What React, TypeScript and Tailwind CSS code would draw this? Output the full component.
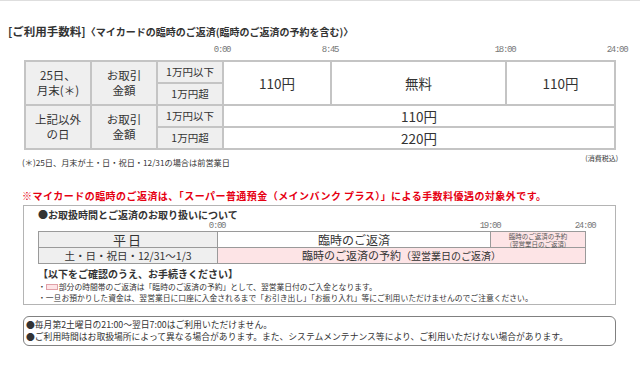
import React from 'react';

const grey = 'bg-[#efefef]';

function Cell({ className = '', children }: { className?: string; children: React.ReactNode }) {
  return <div className={`flex items-center justify-center text-center ${className}`}>{children}</div>;
}

export default function App() {
  return (
    <div className="w-[640px] h-[390px] bg-white border-t border-[#dedede] overflow-hidden text-[#333] font-['Noto_Sans_CJK_JP','Noto_Sans',sans-serif]">
      {/* Title */}
      <div className="mt-[21px] pl-[8px] h-[14px] leading-[14px] font-bold whitespace-nowrap">
        <span className="text-[11.5px]">[ご利用手数料]</span>
        <span className="text-[10px]">〈マイカードの臨時のご返済(臨時のご返済の予約を含む)〉</span>
      </div>

      {/* Time axis */}
      <div className="mt-[9px] flex h-[10px] leading-[10px] text-[9px] tracking-[-1.3px] text-[#777] font-['Liberation_Mono',monospace]">
        <span className="ml-[202px] w-[40px] text-center">0:00</span>
        <span className="ml-[68px] w-[40px] text-center">8:45</span>
        <span className="ml-[135px] w-[40px] text-center">18:00</span>
        <span className="ml-[72px] w-[40px] text-center">24:00</span>
      </div>

      {/* Fee table */}
      <div className="mt-[5px] ml-[24px] w-[592px] grid grid-cols-[64px_64px_64px_106px_173px_107px] grid-rows-[20px_20px_20px_20px] gap-[2px] p-[2px] bg-[#c4c4c4]">
        <Cell className={`${grey} col-start-1 row-start-1 row-span-2 text-[11.5px] leading-[15px]`}>
          25日、<br />月末(＊)
        </Cell>
        <Cell className={`${grey} col-start-2 row-start-1 row-span-2 text-[11.5px] leading-[15px]`}>
          お取引<br />金額
        </Cell>
        <Cell className={`${grey} col-start-3 row-start-1 text-[10.5px]`}>1万円以下</Cell>
        <Cell className={`${grey} col-start-3 row-start-2 text-[10.5px]`}>1万円超</Cell>
        <Cell className="bg-white col-start-4 row-start-1 row-span-2 text-[13.5px]">110円</Cell>
        <Cell className="bg-white col-start-5 row-start-1 row-span-2 text-[13.5px]">無料</Cell>
        <Cell className="bg-white col-start-6 row-start-1 row-span-2 text-[13.5px]">110円</Cell>

        <Cell className={`${grey} col-start-1 row-start-3 row-span-2 text-[11.5px] leading-[15px]`}>
          上記以外<br />の日
        </Cell>
        <Cell className={`${grey} col-start-2 row-start-3 row-span-2 text-[11.5px] leading-[15px]`}>
          お取引<br />金額
        </Cell>
        <Cell className={`${grey} col-start-3 row-start-3 text-[10.5px]`}>1万円以下</Cell>
        <Cell className={`${grey} col-start-3 row-start-4 text-[10.5px]`}>1万円超</Cell>
        <Cell className="bg-white col-start-4 col-span-3 row-start-3 text-[13.5px]">110円</Cell>
        <Cell className="bg-white col-start-4 col-span-3 row-start-4 text-[13.5px]">220円</Cell>
      </div>

      {/* Notes under table */}
      <div className="ml-[22px] w-[596px] flex justify-between items-start">
        <span className="mt-[7px] text-[8.2px] leading-[10px]">(＊)25日、月末が土・日・祝日・12/31の場合は前営業日</span>
        <span className="mt-[3px] text-[7px] leading-[10px]">(消費税込)</span>
      </div>

      {/* Red notice */}
      <div className="mt-[23px] ml-[22px] h-[12px] leading-[12px] text-[10px] tracking-[0.45px] font-bold text-[#e60012] whitespace-nowrap">
        ※マイカードの臨時のご返済は、「スーパー普通預金（メインバンク プラス）」による手数料優遇の対象外です。
      </div>

      {/* Hours box */}
      <div className="mt-[3px] ml-[23px] w-[593px] h-[100px] border border-[#b4b4b4] pl-[14px] pt-[3px]">
        <div className="h-[12px] leading-[12px] text-[10px] font-bold">●お取扱時間とご返済のお取り扱いについて</div>

        <div className="mt-[1px] flex h-[9px] leading-[9px] text-[9px] tracking-[-1.3px] text-[#777] font-['Liberation_Mono',monospace]">
          <span className="ml-[159px] w-[40px] text-center">0:00</span>
          <span className="ml-[233px] w-[40px] text-center">19:00</span>
          <span className="ml-[55px] w-[40px] text-center">24:00</span>
        </div>

        <div className="w-[548px] grid grid-cols-[178px_272px_94px] grid-rows-[15px_15px] gap-px p-px bg-[#9a9a9a]">
          <Cell className={`${grey} text-[13px] tracking-[2px] leading-[15px]`}>平日</Cell>
          <Cell className="bg-white text-[12px] leading-[15px]">臨時のご返済</Cell>
          <Cell className="bg-[#fde4e6] text-[6.5px] leading-[8px] text-[#555] overflow-visible">
            臨時のご返済の予約<br />(翌営業日のご返済)
          </Cell>
          <Cell className={`${grey} text-[10.5px] leading-[15px]`}>土・日・祝日・12/31〜1/3</Cell>
          <Cell className="bg-[#fde4e6] col-span-2 text-[11px] leading-[15px]">
            臨時のご返済の予約<span className="text-[10px]">（翌営業日のご返済）</span>
          </Cell>
        </div>

        <div className="mt-[3px] h-[13px] leading-[13px] text-[10px] font-bold">【以下をご確認のうえ、お手続きください】</div>
        <div className="mt-[1px] text-[7.8px] leading-[11px] whitespace-nowrap">
          <div className="flex items-center">
            ・<span className="inline-block w-[12px] h-[6px] bg-[#fde4e6] border border-[#e0a0a8] mr-[1px]" />
            部分の時間帯のご返済は「臨時のご返済の予約」として、翌営業日付のご入金となります。
          </div>
          <div>・一旦お預かりした資金は、翌営業日に口座に入金されるまで「お引き出し」「お振り入れ」等にご利用いただけませんのでご注意ください。</div>
        </div>
      </div>

      {/* Notice box */}
      <div className="mt-[11px] ml-[23px] w-[593px] h-[30px] border border-[#808080] rounded-[6px] pl-[2px] pt-[2px] text-[8.8px] leading-[12px] whitespace-nowrap">
        <div>●毎月第2土曜日の21:00〜翌日7:00はご利用いただけません。</div>
        <div>●ご利用時間はお取扱場所によって異なる場合があります。また、システムメンテナンス等により、ご利用いただけない場合があります。</div>
      </div>
    </div>
  );
}
